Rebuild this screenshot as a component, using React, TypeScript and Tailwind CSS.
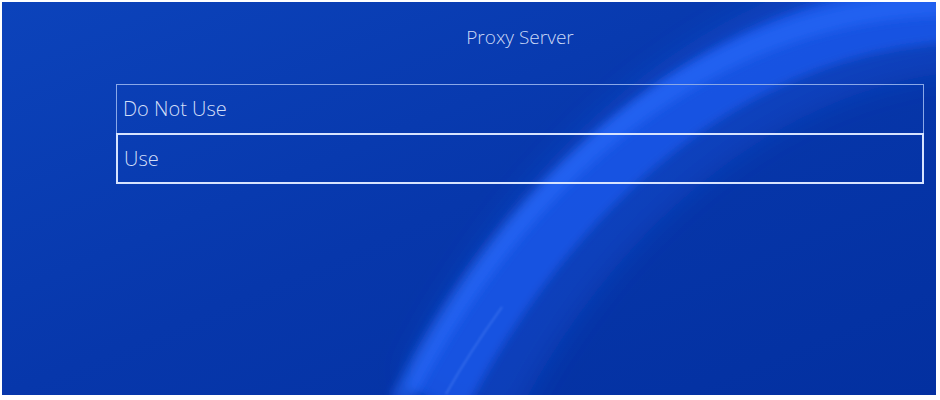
import React from "react";

function Swoosh() {
  return (
    <svg className="absolute inset-0 h-full w-full pointer-events-none" viewBox="0 0 934 393" preserveAspectRatio="none">
      <defs>
        <filter id="blurWide" x="-20%" y="-20%" width="140%" height="140%">
          <feGaussianBlur stdDeviation="14" />
        </filter>
        <filter id="blurMid" x="-20%" y="-20%" width="140%" height="140%">
          <feGaussianBlur stdDeviation="5" />
        </filter>
        <filter id="blurThin" x="-20%" y="-20%" width="140%" height="140%">
          <feGaussianBlur stdDeviation="1.2" />
        </filter>
      </defs>
      {/* soft glow behind the band */}
      <path d="M 950 10 C 745 30, 560 185, 455 400" fill="none" stroke="#1a55e0" strokeWidth="120" strokeOpacity="0.35" filter="url(#blurWide)" />
      {/* main band */}
      <path d="M 945 8 C 730 22, 545 178, 432 400" fill="none" stroke="#1c5cf0" strokeWidth="64" strokeOpacity="0.72" filter="url(#blurMid)" />
      {/* brighter leading edge */}
      <path d="M 938 3 C 705 10, 515 172, 398 400" fill="none" stroke="#2a6dff" strokeWidth="22" strokeOpacity="0.5" filter="url(#blurMid)" />
      {/* faint inner line */}
      <path d="M 500 305 C 482 330, 462 360, 444 392" fill="none" stroke="#6e9bff" strokeWidth="2" strokeOpacity="0.3" filter="url(#blurThin)" />
    </svg>
  );
}

export default function App() {
  return (
    <div className="w-[940px] h-[400px] bg-white overflow-hidden" style={{ fontFamily: '"Open Sans", "Noto Sans", sans-serif' }}>
      <div className="relative ml-[2px] mt-[2px] w-[934px] h-[393px] overflow-hidden bg-gradient-to-br from-[#0c43bb] via-[#0737ab] to-[#0330a0]">
        <Swoosh />
        <div className="relative flex flex-col pl-[114px] pr-[12px]">
          <h1 className="h-[70px] pt-[21px] text-center text-[19px] font-light leading-[28px] text-[#cbd9f6]">Proxy Server</h1>
          <div className="mt-[12px] flex flex-col">
            <div className="h-[49px] flex items-center border-[1.5px] border-b-0 border-[#8aa8e8] px-[6px] text-[20px] font-light text-[#d3dff8]">
              Do Not Use
            </div>
            <div className="h-[51px] flex items-center border-2 border-[#d6e3ff] px-[6px] text-[20px] font-light text-[#d3dff8]">
              Use
            </div>
          </div>
        </div>
      </div>
    </div>
  );
}
